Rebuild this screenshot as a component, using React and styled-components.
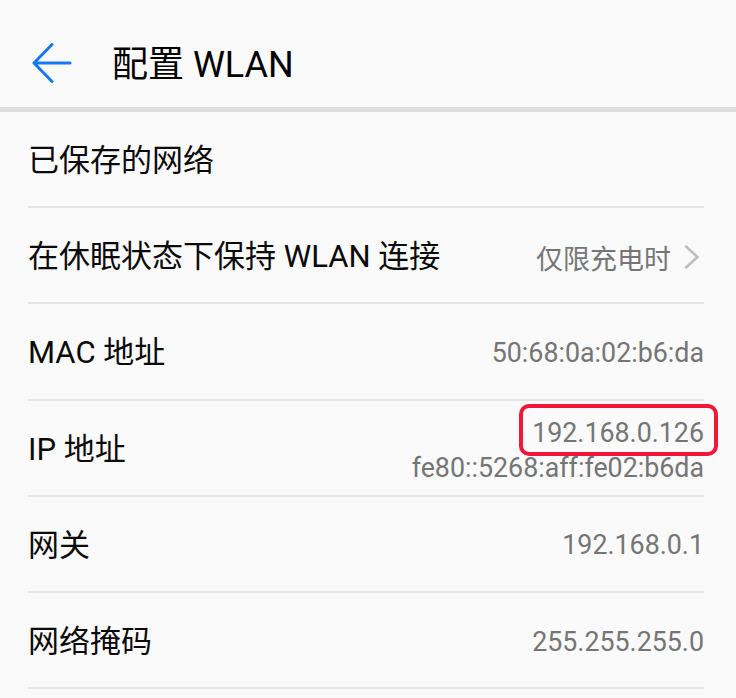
import React from 'react';
import styled, { createGlobalStyle } from 'styled-components';

const GlobalStyle = createGlobalStyle`
  html, body {
    margin: 0;
    padding: 0;
    background: #fafafa;
  }
  body {
    font-family: Roboto, "Noto Sans CJK SC", sans-serif;
    color: #000;
  }
`;

const Page = styled.div`
  width: 736px;
  min-height: 698px;
  background: #fafafa;
`;

const TopBar = styled.header`
  height: 112px;
  box-sizing: border-box;
  padding: 22px 0 0 32px;
  display: flex;
  align-items: center;
  gap: 40px;
  border-bottom: 5px solid #dedede;
`;

const BackButton = styled.button`
  width: 40px;
  height: 40px;
  padding: 0;
  border: none;
  background: none;
  display: flex;
  align-items: center;
  justify-content: center;
  cursor: pointer;
  margin-top: -3px;
`;

const Title = styled.h1`
  margin: 0;
  font-size: 36px;
  font-weight: 400;
  line-height: 40px;
  color: #000;
`;

const List = styled.ul`
  list-style: none;
  margin: 0 32px 0 28px;
  padding: 0;
`;

const Row = styled.li`
  box-sizing: border-box;
  height: 96.2px;
  padding-top: 4px;
  display: flex;
  align-items: center;
  justify-content: space-between;
  border-bottom: 2px solid #e4e4e4;
`;

const Label = styled.span`
  font-size: 31px;
  line-height: 40px;
  color: #0a0a0a;
`;

const Value = styled.div`
  display: flex;
  flex-direction: column;
  align-items: flex-end;
  font-size: 26.8px;
  line-height: 35px;
  color: #757575;
  padding-top: ${p => (p.$multi ? '2px' : '0')};
`;

const Setting = styled.span`
  display: flex;
  align-items: center;
  gap: 13px;
  font-size: 27px;
  color: #757575;
  margin-right: 4px;
`;

const Highlight = styled.span`
  position: relative;

  &::after {
    content: '';
    position: absolute;
    top: -12px;
    bottom: -5px;
    left: -13px;
    right: -14px;
    border: 4px solid #f0173b;
    border-radius: 10px;
  }
`;

const BackArrow = () => (
  <svg width="40" height="40" viewBox="0 0 40 40" fill="none">
    <path
      d="M38 20H2M20 1.5L2 20l18 18.5"
      stroke="#1677f5"
      strokeWidth="3"
      strokeLinecap="round"
      strokeLinejoin="round"
    />
  </svg>
);

const Chevron = () => (
  <svg width="16" height="24" viewBox="0 0 16 24" fill="none">
    <path d="M2 1.5l11.5 10.5L2 22.5" stroke="#bdbdbd" strokeWidth="2.5" strokeLinecap="round" />
  </svg>
);

const App = () => {
  return (
    <Page>
      <GlobalStyle />
      <TopBar>
        <BackButton aria-label="返回">
          <BackArrow />
        </BackButton>
        <Title>配置 WLAN</Title>
      </TopBar>
      <List>
        <Row>
          <Label>已保存的网络</Label>
        </Row>
        <Row>
          <Label>在休眠状态下保持 WLAN 连接</Label>
          <Setting>
            仅限充电时
            <Chevron />
          </Setting>
        </Row>
        <Row>
          <Label>MAC 地址</Label>
          <Value>50:68:0a:02:b6:da</Value>
        </Row>
        <Row>
          <Label>IP 地址</Label>
          <Value $multi>
            <Highlight>192.168.0.126</Highlight>
            <span>fe80::5268:aff:fe02:b6da</span>
          </Value>
        </Row>
        <Row>
          <Label>网关</Label>
          <Value>192.168.0.1</Value>
        </Row>
        <Row>
          <Label>网络掩码</Label>
          <Value>255.255.255.0</Value>
        </Row>
      </List>
    </Page>
  );
};

export default App;
